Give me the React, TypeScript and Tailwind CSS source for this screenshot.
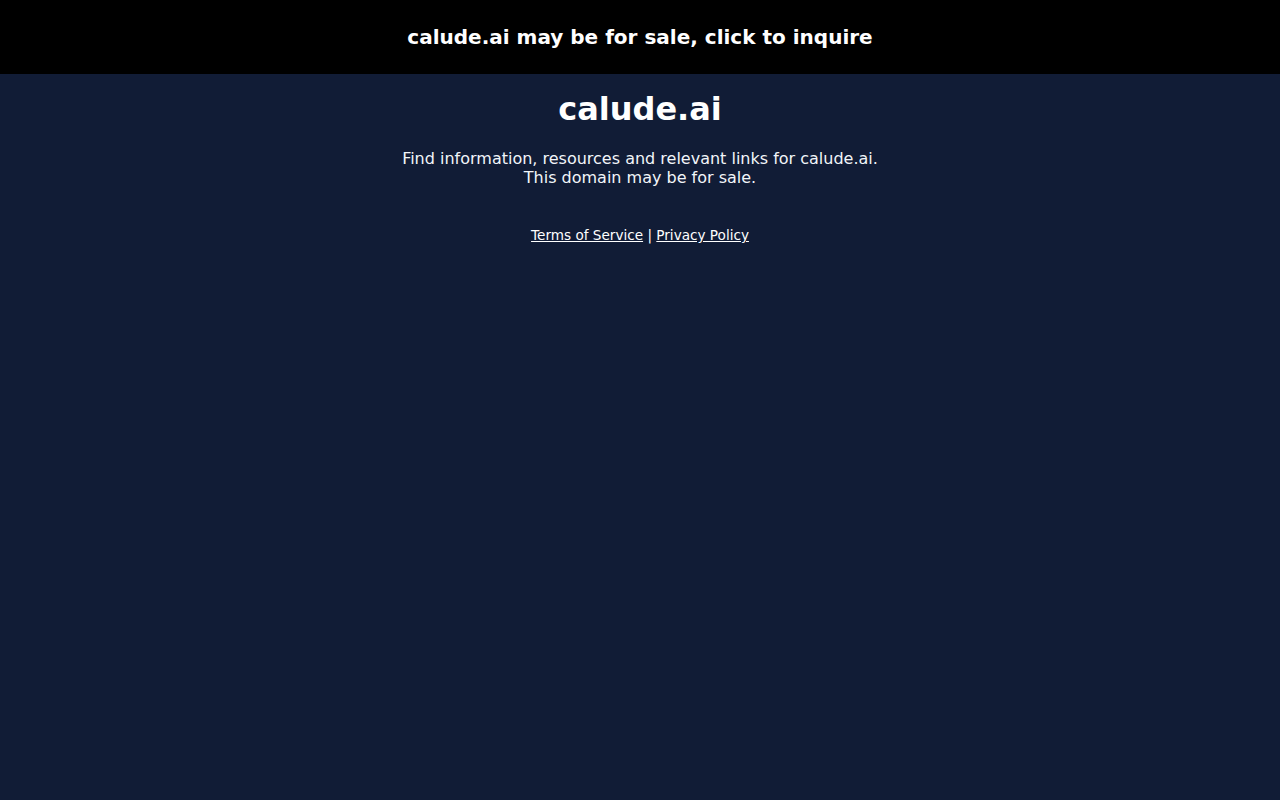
export default function App() {
  return (
    <div className="min-h-[800px] bg-[#111c36] text-white font-['DejaVu_Sans',sans-serif]">
      <a
        href="#"
        className="block bg-black py-6 text-center text-[20px] font-bold leading-[26px] text-white"
      >
        calude.ai may be for sale, click to inquire
      </a>

      <div className="flex flex-col items-center text-center">
        <h1 className="mt-[17px] text-[32px] font-bold leading-[37px]">calude.ai</h1>
        <p className="mt-[21px] text-[16px] leading-[19px] text-[#f1f5f9]">
          Find information, resources and relevant links for calude.ai.
          <br />
          This domain may be for sale.
        </p>
        <div className="mt-10 text-[13.6px] leading-[16px]">
          <a href="#" className="underline">
            Terms of Service
          </a>{" "}
          |{" "}
          <a href="#" className="underline">
            Privacy Policy
          </a>
        </div>
      </div>
    </div>
  )
}
